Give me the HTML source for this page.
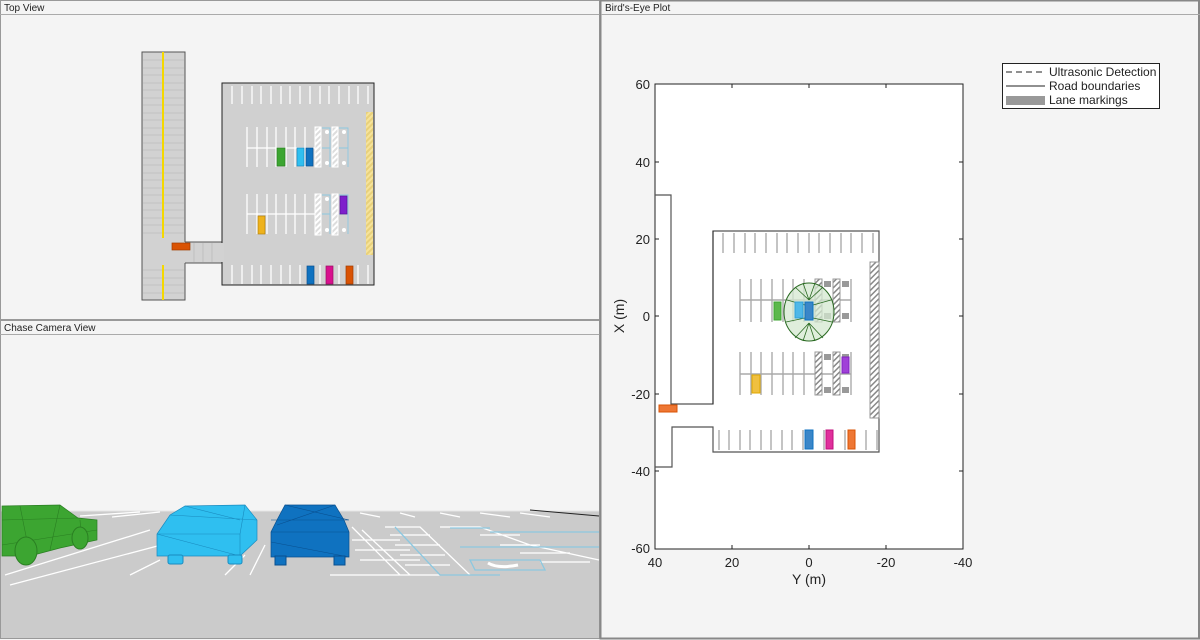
<!DOCTYPE html>
<html><head><meta charset="utf-8"><style>
html,body{margin:0;padding:0;background:#f4f4f4;width:1200px;height:640px;overflow:hidden;font-family:"Liberation Sans",Arial,sans-serif}
svg{position:absolute;left:0;top:0}
</style></head><body>
<svg width="1200" height="640" viewBox="0 0 1200 640" xmlns="http://www.w3.org/2000/svg" font-family="Liberation Sans, Arial, sans-serif">
<defs>
<pattern id="hw" patternUnits="userSpaceOnUse" width="4" height="4" patternTransform="rotate(45)"><rect width="4" height="4" fill="#ddd"/><rect width="2" height="4" fill="#fff"/></pattern>
<pattern id="hy" patternUnits="userSpaceOnUse" width="4" height="4" patternTransform="rotate(45)"><rect width="4" height="4" fill="#e8d07a"/><rect width="2" height="4" fill="#f6e39a"/></pattern>
<pattern id="hg" patternUnits="userSpaceOnUse" width="4" height="4" patternTransform="rotate(45)"><rect width="4" height="4" fill="#fff"/><rect width="1.5" height="4" fill="#888"/></pattern>
</defs>
<rect width="1200" height="640" fill="#f4f4f4"/>
<!-- CHASE VIEW ground first -->
<rect x="1" y="511" width="598" height="127" fill="#cbcbcb"/>
<!-- panel borders -->
<rect x="0.5" y="0.5" width="599" height="319" fill="none" stroke="#999"/>
<line x1="0" y1="14.5" x2="600" y2="14.5" stroke="#aaa"/>
<rect x="0.5" y="320.5" width="599" height="318" fill="none" stroke="#999"/>
<line x1="0" y1="334.5" x2="600" y2="334.5" stroke="#aaa"/>
<rect x="600.5" y="0.5" width="598.5" height="638" fill="none" stroke="#888" stroke-width="2"/>
<line x1="601" y1="14.5" x2="1200" y2="14.5" stroke="#aaa"/>
<text x="4" y="11" font-size="10" fill="#222">Top View</text>
<text x="4" y="331" font-size="10" fill="#222">Chase Camera View</text>
<text x="605" y="11" font-size="10" fill="#222">Bird's-Eye Plot</text>

<!-- TOP VIEW -->
<g>
<rect x="142" y="52" width="43" height="248" fill="#d2d2d2" stroke="#555" stroke-width="1"/>
<rect x="184" y="242" width="39" height="21" fill="#d2d2d2"/>
<line x1="185" y1="242" x2="222" y2="242" stroke="#555"/><line x1="185" y1="263" x2="222" y2="263" stroke="#555"/>
<rect x="222" y="83" width="152" height="202" fill="#d0d0d0" stroke="#222" stroke-width="1"/>
<rect x="221" y="243" width="3" height="19" fill="#d2d2d2"/><rect x="184" y="243" width="2" height="19" fill="#d2d2d2"/>
<g stroke="#bbb" stroke-width="0.8">
<line x1="143" y1="60" x2="184" y2="60"/><line x1="143" y1="68" x2="184" y2="68"/><line x1="143" y1="75" x2="184" y2="75"/><line x1="143" y1="83" x2="184" y2="83"/><line x1="143" y1="90" x2="184" y2="90"/><line x1="143" y1="98" x2="184" y2="98"/><line x1="143" y1="105" x2="184" y2="105"/><line x1="143" y1="113" x2="184" y2="113"/><line x1="143" y1="120" x2="184" y2="120"/><line x1="143" y1="128" x2="184" y2="128"/><line x1="143" y1="135" x2="184" y2="135"/><line x1="143" y1="143" x2="184" y2="143"/><line x1="143" y1="150" x2="184" y2="150"/><line x1="143" y1="158" x2="184" y2="158"/><line x1="143" y1="165" x2="184" y2="165"/><line x1="143" y1="173" x2="184" y2="173"/><line x1="143" y1="180" x2="184" y2="180"/><line x1="143" y1="188" x2="184" y2="188"/><line x1="143" y1="195" x2="184" y2="195"/><line x1="143" y1="203" x2="184" y2="203"/><line x1="143" y1="210" x2="184" y2="210"/><line x1="143" y1="218" x2="184" y2="218"/><line x1="143" y1="225" x2="184" y2="225"/><line x1="143" y1="233" x2="184" y2="233"/>
<line x1="143" y1="270" x2="184" y2="270"/><line x1="143" y1="278" x2="184" y2="278"/><line x1="143" y1="285" x2="184" y2="285"/><line x1="143" y1="293" x2="184" y2="293"/>
<line x1="194" y1="243" x2="194" y2="262"/><line x1="203" y1="243" x2="203" y2="262"/><line x1="212" y1="243" x2="212" y2="262"/>
</g>
<line x1="163" y1="52" x2="163" y2="238" stroke="#f5d800" stroke-width="2"/>
<line x1="163" y1="265" x2="163" y2="300" stroke="#f5d800" stroke-width="2"/>
<g stroke="#fff" stroke-width="1.3">
<line x1="232" y1="86" x2="232" y2="104"/><line x1="242" y1="86" x2="242" y2="104"/><line x1="252" y1="86" x2="252" y2="104"/><line x1="261" y1="86" x2="261" y2="104"/><line x1="271" y1="86" x2="271" y2="104"/><line x1="281" y1="86" x2="281" y2="104"/><line x1="290" y1="86" x2="290" y2="104"/><line x1="300" y1="86" x2="300" y2="104"/><line x1="310" y1="86" x2="310" y2="104"/><line x1="320" y1="86" x2="320" y2="104"/><line x1="329" y1="86" x2="329" y2="104"/><line x1="339" y1="86" x2="339" y2="104"/><line x1="349" y1="86" x2="349" y2="104"/><line x1="358" y1="86" x2="358" y2="104"/><line x1="368" y1="86" x2="368" y2="104"/>
<line x1="232" y1="265" x2="232" y2="284"/><line x1="242" y1="265" x2="242" y2="284"/><line x1="252" y1="265" x2="252" y2="284"/><line x1="261" y1="265" x2="261" y2="284"/><line x1="271" y1="265" x2="271" y2="284"/><line x1="281" y1="265" x2="281" y2="284"/><line x1="290" y1="265" x2="290" y2="284"/><line x1="300" y1="265" x2="300" y2="284"/><line x1="320" y1="265" x2="320" y2="284"/><line x1="339" y1="265" x2="339" y2="284"/><line x1="358" y1="265" x2="358" y2="284"/><line x1="368" y1="265" x2="368" y2="284"/>
<line x1="247" y1="127" x2="247" y2="167"/><line x1="257" y1="127" x2="257" y2="167"/><line x1="267" y1="127" x2="267" y2="167"/><line x1="276" y1="127" x2="276" y2="167"/><line x1="286" y1="127" x2="286" y2="167"/><line x1="295" y1="127" x2="295" y2="167"/><line x1="305" y1="127" x2="305" y2="167"/>
<line x1="247" y1="148" x2="315" y2="148"/>
<line x1="247" y1="194" x2="247" y2="234"/><line x1="257" y1="194" x2="257" y2="234"/><line x1="267" y1="194" x2="267" y2="234"/><line x1="276" y1="194" x2="276" y2="234"/><line x1="286" y1="194" x2="286" y2="234"/><line x1="295" y1="194" x2="295" y2="234"/><line x1="305" y1="194" x2="305" y2="234"/>
<line x1="247" y1="214" x2="315" y2="214"/>
</g>
<rect x="315" y="127" width="6" height="40" fill="url(#hw)" stroke="#fff"/>
<rect x="332" y="127" width="6" height="40" fill="url(#hw)" stroke="#fff"/>
<rect x="315" y="194" width="6" height="41" fill="url(#hw)" stroke="#fff"/>
<rect x="332" y="194" width="6" height="41" fill="url(#hw)" stroke="#fff"/>
<g stroke="#8cc8e0" stroke-width="0.9" fill="none">
<path d="M322 128H330V167M322 148H330M339 128H348V167M339 148H348"/>
<path d="M322 195H330V234M322 214H330M339 195H348V234M339 214H348"/>
</g>
<g fill="#fff"><circle cx="327" cy="132" r="2"/><circle cx="327" cy="163" r="2"/><circle cx="344" cy="132" r="2"/><circle cx="344" cy="163" r="2"/><circle cx="327" cy="199" r="2"/><circle cx="327" cy="230" r="2"/><circle cx="344" cy="230" r="2"/></g>
<rect x="366" y="112" width="7" height="143" fill="url(#hy)"/>
<rect x="277" y="148" width="8" height="18" fill="#3ca531" stroke="#2a7f22" stroke-width="0.7"/>
<rect x="297" y="148" width="7" height="18" fill="#2fbff0" stroke="#1a8bbf" stroke-width="0.7"/>
<rect x="306" y="148" width="7" height="18" fill="#0f72c0" stroke="#095090" stroke-width="0.7"/>
<rect x="340" y="196" width="7" height="18" fill="#7e1fcc" stroke="#5a1296" stroke-width="0.7"/>
<rect x="258" y="216" width="7" height="18" fill="#eeb21c" stroke="#b5820a" stroke-width="0.7"/>
<rect x="172" y="243" width="18" height="7" fill="#d95304" stroke="#a13c00" stroke-width="0.7"/>
<rect x="307" y="266" width="7" height="18" fill="#0f72c0" stroke="#095090" stroke-width="0.7"/>
<rect x="326" y="266" width="7" height="18" fill="#d8118d" stroke="#9c0c66" stroke-width="0.7"/>
<rect x="346" y="266" width="7" height="18" fill="#d95304" stroke="#a13c00" stroke-width="0.7"/>
</g>

<!-- CHASE VIEW -->
<g>
<line x1="1" y1="511" x2="599" y2="511" stroke="#e6e6e6"/>
<line x1="530" y1="510" x2="599" y2="516" stroke="#222" stroke-width="1"/>
<g stroke="#fff" stroke-width="1.3" fill="none">
<line x1="80" y1="516" x2="140" y2="512"/><line x1="112" y1="517" x2="160" y2="512"/><line x1="360" y1="513" x2="380" y2="517"/><line x1="400" y1="513" x2="415" y2="517"/><line x1="440" y1="513" x2="460" y2="517"/><line x1="480" y1="513" x2="510" y2="517"/><line x1="520" y1="513" x2="550" y2="517"/>
<line x1="5" y1="575" x2="150" y2="530"/><line x1="10" y1="585" x2="180" y2="540"/><line x1="130" y1="575" x2="160" y2="560"/><line x1="250" y1="575" x2="265" y2="545"/><line x1="225" y1="575" x2="245" y2="555"/>
<polyline points="305,527 325,527 345,530"/>
<path d="M352 527 L400 575 M362 530 L410 575 M352 540 L400 540 M355 550 L410 550 M360 560 L420 560 M330 575 L440 575"/>
<path d="M385 527 L420 527 L470 575 M390 535 L430 535 M395 545 L440 545 M400 555 L445 555 M405 565 L450 565"/>
<path d="M440 527 L480 527 L530 545 L599 560 M480 535 L520 535 M500 545 L540 545 M520 553 L570 553 M540 562 L590 562"/>
</g>
<g stroke="#8cc8e0" stroke-width="1.3" fill="none">
<path d="M395 527 L440 575 L500 575 M450 528 L490 528 M490 532 L599 532 M460 547 L599 547"/>
<path d="M470 560 L540 560 L545 570 L475 570 Z"/>
</g>
<path d="M488 563 q10 6 30 2" stroke="#fff" stroke-width="3" fill="none"/>
<!-- green car -->
<polygon points="2,506 60,505 78,518 97,520 97,540 60,548 30,556 2,556" fill="#3ca531" stroke="#2a7f22" stroke-width="0.7"/>
<path d="M2 520 L78 518 M20 506 L30 556 M60 505 L50 550 M2 545 L97 530 M80 520 L82 545" stroke="#2a7f22" stroke-width="0.6"/>
<ellipse cx="26" cy="551" rx="11" ry="14" fill="#3ca531" stroke="#2a7f22"/>
<ellipse cx="80" cy="538" rx="8" ry="11" fill="#3ca531" stroke="#2a7f22"/>
<!-- light blue car -->
<polygon points="185,506 245,505 257,520 257,540 240,556 157,556 157,534 170,515" fill="#2fbff0" stroke="#1a8bbf" stroke-width="0.7"/>
<path d="M157 534 L240 534 L245 505 M170 515 L257 520 M157 534 L240 556 M240 534 L240 556 M185 506 L240 520" stroke="#1a8bbf" stroke-width="0.6" fill="none"/>
<rect x="168" y="555" width="15" height="9" rx="2" fill="#2fbff0" stroke="#1a8bbf"/><rect x="228" y="555" width="14" height="9" rx="2" fill="#2fbff0" stroke="#1a8bbf"/>
<!-- blue car -->
<polygon points="285,505 335,505 344,520 349,532 349,557 271,557 271,532 277,520" fill="#0f72c0" stroke="#095090" stroke-width="0.7"/>
<path d="M271 532 L349 532 M285 505 L349 520 M271 542 L349 557 M277 525 L335 505 M271 520 L349 520" stroke="#095090" stroke-width="0.6" fill="none"/>
<rect x="275" y="556" width="11" height="9" fill="#0f72c0" stroke="#095090"/><rect x="334" y="556" width="11" height="9" fill="#0f72c0" stroke="#095090"/>
</g>

<!-- BIRD'S EYE -->
<g>
<rect x="655" y="84" width="308" height="465" fill="#fff" stroke="#222" stroke-width="1"/>
<g stroke="#222" stroke-width="1">
<line x1="655" y1="162" x2="659" y2="162"/><line x1="655" y1="239" x2="659" y2="239"/><line x1="655" y1="316" x2="659" y2="316"/><line x1="655" y1="394" x2="659" y2="394"/><line x1="655" y1="471" x2="659" y2="471"/>
<line x1="963" y1="162" x2="959" y2="162"/><line x1="963" y1="239" x2="959" y2="239"/><line x1="963" y1="316" x2="959" y2="316"/><line x1="963" y1="394" x2="959" y2="394"/><line x1="963" y1="471" x2="959" y2="471"/>
<line x1="732" y1="549" x2="732" y2="545"/><line x1="809" y1="549" x2="809" y2="545"/><line x1="886" y1="549" x2="886" y2="545"/>
<line x1="732" y1="84" x2="732" y2="88"/><line x1="809" y1="84" x2="809" y2="88"/><line x1="886" y1="84" x2="886" y2="88"/>
</g>
<g font-size="13" fill="#222" text-anchor="end">
<text x="650" y="89">60</text><text x="650" y="167">40</text><text x="650" y="244">20</text><text x="650" y="321">0</text><text x="650" y="399">-20</text><text x="650" y="476">-40</text><text x="650" y="553">-60</text>
</g>
<g font-size="13" fill="#222" text-anchor="middle">
<text x="655" y="567">40</text><text x="732" y="567">20</text><text x="809" y="567">0</text><text x="886" y="567">-20</text><text x="963" y="567">-40</text>
<text x="809" y="584" font-size="14">Y (m)</text>
<text transform="translate(624,316) rotate(-90)" font-size="14">X (m)</text>
</g>
<path d="M655 195H671V404H713V231H879V452H713V427H672V467H655" fill="none" stroke="#555" stroke-width="1.2"/>
<line x1="713" y1="231" x2="713" y2="404" stroke="#222"/>
<g stroke="#aaa" stroke-width="1.4">
<line x1="723" y1="233" x2="723" y2="253"/><line x1="734" y1="233" x2="734" y2="253"/><line x1="745" y1="233" x2="745" y2="253"/><line x1="755" y1="233" x2="755" y2="253"/><line x1="766" y1="233" x2="766" y2="253"/><line x1="777" y1="233" x2="777" y2="253"/><line x1="787" y1="233" x2="787" y2="253"/><line x1="798" y1="233" x2="798" y2="253"/><line x1="809" y1="233" x2="809" y2="253"/><line x1="819" y1="233" x2="819" y2="253"/><line x1="830" y1="233" x2="830" y2="253"/><line x1="841" y1="233" x2="841" y2="253"/><line x1="851" y1="233" x2="851" y2="253"/><line x1="862" y1="233" x2="862" y2="253"/><line x1="873" y1="233" x2="873" y2="253"/>
<line x1="719" y1="430" x2="719" y2="450"/><line x1="729" y1="430" x2="729" y2="450"/><line x1="740" y1="430" x2="740" y2="450"/><line x1="750" y1="430" x2="750" y2="450"/><line x1="761" y1="430" x2="761" y2="450"/><line x1="771" y1="430" x2="771" y2="450"/><line x1="782" y1="430" x2="782" y2="450"/><line x1="792" y1="430" x2="792" y2="450"/><line x1="803" y1="430" x2="803" y2="450"/><line x1="824" y1="430" x2="824" y2="450"/><line x1="845" y1="430" x2="845" y2="450"/><line x1="866" y1="430" x2="866" y2="450"/><line x1="877" y1="430" x2="877" y2="450"/>
<line x1="740" y1="279" x2="740" y2="322"/><line x1="751" y1="279" x2="751" y2="322"/><line x1="761" y1="279" x2="761" y2="322"/><line x1="772" y1="279" x2="772" y2="322"/><line x1="783" y1="279" x2="783" y2="322"/><line x1="793" y1="279" x2="793" y2="322"/><line x1="804" y1="279" x2="804" y2="322"/><line x1="851" y1="279" x2="851" y2="322"/>
<line x1="740" y1="300" x2="851" y2="300"/>
<line x1="740" y1="352" x2="740" y2="395"/><line x1="751" y1="352" x2="751" y2="395"/><line x1="761" y1="352" x2="761" y2="395"/><line x1="772" y1="352" x2="772" y2="395"/><line x1="783" y1="352" x2="783" y2="395"/><line x1="793" y1="352" x2="793" y2="395"/><line x1="804" y1="352" x2="804" y2="395"/><line x1="851" y1="352" x2="851" y2="395"/>
<line x1="740" y1="374" x2="851" y2="374"/>
</g>
<g fill="url(#hg)" stroke="#999" stroke-width="1">
<rect x="815" y="279" width="7" height="43"/><rect x="833" y="279" width="7" height="43"/>
<rect x="815" y="352" width="7" height="43"/><rect x="833" y="352" width="7" height="43"/>
<rect x="870" y="262" width="9" height="156"/>
</g>
<g fill="#999"><rect x="824" y="281" width="7" height="6"/><rect x="842" y="281" width="7" height="6"/><rect x="824" y="313" width="7" height="6"/><rect x="842" y="313" width="7" height="6"/><rect x="824" y="354" width="7" height="6"/><rect x="842" y="354" width="7" height="6"/><rect x="824" y="387" width="7" height="6"/><rect x="842" y="387" width="7" height="6"/></g>
<ellipse cx="809" cy="312" rx="25" ry="29" fill="#d4e8d0" fill-opacity="0.75" stroke="#2a6a22" stroke-width="1"/>
<g stroke="#2a6a22" stroke-width="0.8" fill="none">
<path d="M795 287L809 300L803 283M809 300L815 283M809 300L823 287M787 300L805 305M831 300L813 305M786 322L805 318M832 322L813 318M795 338L809 323L803 341M809 323L815 341M809 323L823 338"/>
</g>
<rect x="774" y="302" width="7" height="18" fill="#5cb84c" stroke="#3ca531"/>
<rect x="795" y="302" width="8" height="16" fill="#4fb8e8" stroke="#2fa0d8"/>
<rect x="805" y="302" width="8" height="18" fill="#3a86c8" stroke="#0f72c0"/>
<rect x="842" y="357" width="7" height="16" fill="#a040d8" stroke="#8020c0"/>
<rect x="752" y="375" width="8" height="18" fill="#f0c040" stroke="#e0a800"/>
<rect x="659" y="405" width="18" height="7" fill="#ee7734" stroke="#d95304"/>
<rect x="805" y="430" width="8" height="19" fill="#3a86c8" stroke="#0f72c0"/>
<rect x="826" y="430" width="7" height="19" fill="#e0309c" stroke="#c0107c"/>
<rect x="848" y="430" width="7" height="19" fill="#ee7734" stroke="#d95304"/>
<rect x="1002.5" y="63.5" width="157" height="45" fill="#fff" stroke="#222"/>
<line x1="1006" y1="72" x2="1045" y2="72" stroke="#222" stroke-dasharray="6,4"/>
<line x1="1006" y1="86" x2="1045" y2="86" stroke="#222"/>
<rect x="1006" y="96" width="39" height="9" fill="#999"/>
<g font-size="12" fill="#222"><text x="1049" y="76">Ultrasonic Detection</text><text x="1049" y="90">Road boundaries</text><text x="1049" y="104">Lane markings</text></g>
</g>
</svg>
</body></html>
